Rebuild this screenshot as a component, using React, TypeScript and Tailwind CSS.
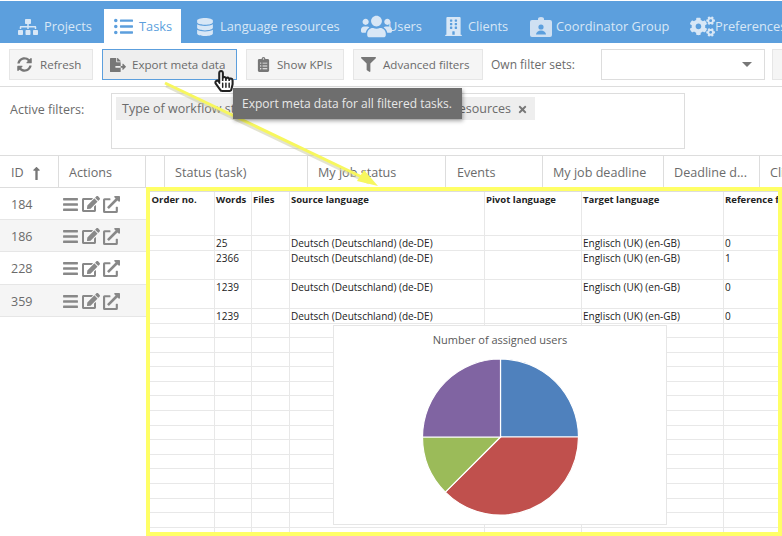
import { FaBars, FaBuilding, FaCogs, FaDatabase, FaEdit, FaExternalLinkAlt, FaFileExport, FaFilter, FaHandPointer, FaListUl, FaLongArrowAltUp, FaRegHandPointer, FaSitemap, FaSyncAlt, FaTimes, FaUsers, FaClipboardList } from "react-icons/fa"

const headers = [
  { label: "ID", width: "w-[59px]", pad: "pl-[11px]" },
  { label: "Actions", width: "w-[87px]", pad: "pl-[10px]" },
  { label: "", width: "w-[19px]", pad: "" },
  { label: "Status (task)", width: "w-[143px]", pad: "pl-[10px]" },
  { label: "My job status", width: "w-[138px]", pad: "pl-[10px]" },
  { label: "Events", width: "w-[97px]", pad: "pl-[11px]" },
  { label: "My job deadline", width: "w-[121px]", pad: "pl-[10px]" },
  { label: "Deadline d...", width: "w-[96px]", pad: "pl-[10px]" },
  { label: "Cli", width: "w-[30px]", pad: "pl-[10px]" },
]

const tasks = [
  { id: "184", row: "h-[32px] bg-white" },
  { id: "186", row: "h-[32px] bg-[#f5f5f5]" },
  { id: "228", row: "h-[33px] bg-white" },
  { id: "359", row: "h-[32px] bg-[#f5f5f5]" },
]

const sheetRows = [
  { h: "h-[15px]", words: "25", source: "Deutsch (Deutschland) (de-DE)", target: "Englisch (UK) (en-GB)", ref: "0" },
  { h: "h-[29px]", words: "2366", source: "Deutsch (Deutschland) (de-DE)", target: "Englisch (UK) (en-GB)", ref: "1" },
  { h: "h-[29px]", words: "1239", source: "Deutsch (Deutschland) (de-DE)", target: "Englisch (UK) (en-GB)", ref: "0" },
  { h: "h-[15px]", words: "1239", source: "Deutsch (Deutschland) (de-DE)", target: "Englisch (UK) (en-GB)", ref: "0" },
]

const emptyRows = Array.from({ length: 15 }, (_, i) => i)
const cell = "border-r border-b border-[#e8e8e8] align-top px-[1.5px] pt-[2px] overflow-hidden whitespace-nowrap"

function BadgeIcon() {
  return (
    <svg width="22" height="20" viewBox="0 0 22 20" className="shrink-0">
      <path d="M2 3 H8 V2 a3 2 0 0 1 6 0 V3 H20 a2 2 0 0 1 2 2 V18 a2 2 0 0 1 -2 2 H2 a2 2 0 0 1 -2 -2 V5 a2 2 0 0 1 2 -2 Z" fill="#cfe0f2" />
      <circle cx="11" cy="10" r="2.6" fill="#5c9fdd" />
      <path d="M6 17.5 a5 4 0 0 1 10 0 Z" fill="#5c9fdd" />
    </svg>
  )
}

export default function App() {
  return (
    <div className="relative w-[782px] h-[536px] overflow-hidden bg-white text-[#6b6b6b]" style={{ fontFamily: "'Open Sans', sans-serif" }}>
      {/* top nav */}
      <nav className="mt-[1px] h-[42px] bg-[#5c9fdd] flex items-end text-[12.8px] text-[#d8e7f6] overflow-hidden whitespace-nowrap">
        <div className="ml-[18px] h-[34px] flex items-center gap-[6px] w-[86px] shrink-0 pt-[1px]">
          <FaSitemap className="text-[20px] shrink-0" />
          <span>Projects</span>
        </div>
        <div className="w-[77px] h-[34px] bg-white text-[#5c9fdd] flex items-center gap-[6px] pl-[10px] shrink-0 pt-[1px]">
          <FaListUl className="text-[19px] shrink-0" />
          <span>Tasks</span>
        </div>
        <div className="ml-[15px] h-[34px] flex items-center gap-[6px] w-[165px] shrink-0 pt-[1px]">
          <FaDatabase className="text-[18px] shrink-0" />
          <span>Language resources</span>
        </div>
        <div className="h-[34px] flex items-center w-[83px] shrink-0 pt-[1px]">
          <FaUsers className="text-[31px] shrink-0 -mr-[4px]" />
          <span>Users</span>
        </div>
        <div className="h-[34px] flex items-center gap-[5px] w-[86px] shrink-0 pt-[1px]">
          <FaBuilding className="text-[19px] shrink-0" />
          <span>Clients</span>
        </div>
        <div className="h-[34px] flex items-center gap-[4px] w-[160px] shrink-0 pt-[1px]">
          <BadgeIcon />
          <span>Coordinator Group</span>
        </div>
        <div className="h-[34px] flex items-center shrink-0 pt-[1px]">
          <FaCogs className="text-[25px] shrink-0" />
          <span>Preferences</span>
        </div>
      </nav>

      {/* toolbar */}
      <div className="h-[44px] pt-[6px] pl-[9px] flex items-start text-[11.6px] border-b border-[#ddd] whitespace-nowrap">
        <button className="w-[84px] h-[31px] shrink-0 bg-[#f5f5f5] border border-[#e6e6e6] flex items-center pl-[7px] gap-[8px]">
          <FaSyncAlt className="text-[15px] text-[#777]" />
          <span className="pt-[1px]">Refresh</span>
        </button>
        <button className="ml-[9px] w-[135px] h-[31px] shrink-0 bg-[#eee] border border-[#5c9fdd] flex items-center pl-[7px] gap-[6px]">
          <FaFileExport className="text-[16px] text-[#777]" />
          <span className="pt-[1px]">Export meta data</span>
        </button>
        <button className="ml-[9px] w-[98px] h-[31px] shrink-0 bg-[#f5f5f5] border border-[#e6e6e6] flex items-center pl-[9px] gap-[6px]">
          <FaClipboardList className="text-[15px] text-[#777]" />
          <span className="pt-[1px]">Show KPIs</span>
        </button>
        <button className="ml-[9px] w-[130px] h-[31px] shrink-0 bg-[#f5f5f5] border border-[#e6e6e6] flex items-center pl-[7px] gap-[7px]">
          <FaFilter className="text-[15px] text-[#777]" />
          <span className="pt-[1px]">Advanced filters</span>
        </button>
        <span className="ml-[8px] mt-[7px] w-[110px] shrink-0 text-[12px]">Own filter sets:</span>
        <div className="w-[164px] h-[31px] shrink-0 border border-[#ddd] flex items-center justify-end pr-[12px]">
          <div className="w-0 h-0 border-x-[5px] border-x-transparent border-t-[5px] border-t-[#777]" />
        </div>
        <div className="ml-[7px] w-[20px] h-[31px] shrink-0 bg-[#f5f5f5] border border-[#e6e6e6]" />
      </div>

      {/* active filters */}
      <div className="h-[69px] pl-[10px] pt-[6px] flex items-start border-b border-[#ddd] text-[12.5px]">
        <span className="w-[101px] mt-[8px]">Active filters:</span>
        <div className="w-[574px] h-[56px] border border-[#ddd] pl-[4px] pt-[3px]">
          <div className="w-[419px] h-[23px] bg-[#eee] flex items-center pl-[6px] pr-[7px] pt-[1px]">
            <span className="whitespace-nowrap">Type of workflow step</span>
            <span className="ml-auto whitespace-nowrap">Language resources</span>
            <FaTimes className="ml-[6px] text-[11px] text-[#777]" />
          </div>
        </div>
      </div>

      {/* grid header */}
      <div className="flex h-[32px] border-b border-[#ddd] text-[12.6px] whitespace-nowrap">
        {headers.map((h, i) => (
          <div key={i} className={`${h.width} ${h.pad} shrink-0 flex items-center border-r border-[#ddd] pt-[3px]`}>
            {h.label}
            {h.label === "ID" && <FaLongArrowAltUp className="ml-[5px] text-[15px] text-[#777]" />}
          </div>
        ))}
      </div>

      {/* grid rows */}
      <div className="w-[146px]">
        {tasks.map((t) => (
          <div key={t.id} className={`${t.row} flex items-center border-b border-[#e6e6e6] text-[12.5px]`}>
            <span className="w-[62px] pl-[11px] pt-[3px]">{t.id}</span>
            <div className="flex items-center gap-[3px] text-[#888] pt-[1px]">
              <FaBars className="text-[17px]" />
              <FaEdit className="text-[18px]" />
              <FaExternalLinkAlt className="text-[17px]" />
            </div>
          </div>
        ))}
      </div>

      {/* pasted spreadsheet with yellow frame */}
      <div className="absolute left-[146px] top-[187px] w-[636px] h-[349px] border-4 border-[#ffff66] bg-white overflow-hidden">
        <div className="border-t border-[#ddd]">
          <table className="table-fixed w-[640px] border-collapse text-[10px] leading-[11px] text-[#222]">
            <colgroup>
              <col className="w-[64px]" />
              <col className="w-[37px]" />
              <col className="w-[38px]" />
              <col className="w-[195px]" />
              <col className="w-[97px]" />
              <col className="w-[142px]" />
              <col />
            </colgroup>
            <tbody>
              <tr className="h-[43px] font-bold text-[9.5px]">
                <td className={cell}>Order no.</td>
                <td className={cell}>Words</td>
                <td className={cell}>Files</td>
                <td className={cell}>Source language</td>
                <td className={cell}>Pivot language</td>
                <td className={cell}>Target language</td>
                <td className={cell}>Reference f</td>
              </tr>
              {sheetRows.map((r, i) => (
                <tr key={i} className={r.h}>
                  <td className={cell} />
                  <td className={cell}>{r.words}</td>
                  <td className={cell} />
                  <td className={cell}>{r.source}</td>
                  <td className={cell} />
                  <td className={cell}>{r.target}</td>
                  <td className={cell}>{r.ref}</td>
                </tr>
              ))}
              {emptyRows.map((i) => (
                <tr key={i} className="h-[14.6px]">
                  <td className={cell} />
                  <td className={cell} />
                  <td className={cell} />
                  <td className={cell} />
                  <td className={cell} />
                  <td className={cell} />
                  <td className={cell} />
                </tr>
              ))}
            </tbody>
          </table>
        </div>
      </div>

      {/* chart */}
      <div className="absolute left-[333px] top-[325px] w-[334px] h-[200px] bg-white border border-[#e6e6e6] flex flex-col items-center">
        <span className="mt-[5px] text-[11px] leading-[18px] text-[#595959]">Number of assigned users</span>
        <svg width="160" height="160" viewBox="0 0 160 160" className="mt-[8px] translate-x-[0.5px]">
          <g stroke="#fff" strokeWidth="1.2">
            <path d="M80 80 L80 2 A78 78 0 0 1 158 80 Z" fill="#4f81bd" />
            <path d="M80 80 L158 80 A78 78 0 0 1 24.8 135.2 Z" fill="#c0504d" />
            <path d="M80 80 L24.8 135.2 A78 78 0 0 1 2 80 Z" fill="#9bbb59" />
            <path d="M80 80 L2 80 A78 78 0 0 1 80 2 Z" fill="#8064a2" />
          </g>
        </svg>
      </div>

      {/* yellow arrow */}
      <svg className="absolute left-0 top-0 pointer-events-none" width="782" height="536">
        <line x1="165" y1="84" x2="368" y2="181" stroke="#c9c9a0" strokeWidth="3" opacity="0.5" transform="translate(1 2)" />
        <line x1="165" y1="83" x2="366" y2="179" stroke="#f7f75e" strokeWidth="3" />
        <path d="M378 186 L357 181 L364 170 Z" fill="#f7f75e" />
      </svg>

      {/* tooltip */}
      <div className="absolute left-[233px] top-[88px] w-[229px] h-[31px] bg-[#6e6e6e] text-[#e8e8e8] text-[12px] flex items-center pl-[9px] whitespace-nowrap shadow-[1px_2px_4px_rgba(0,0,0,0.35)]">
        Export meta data for all filtered tasks.
      </div>

      {/* mouse pointer */}
      <div className="absolute left-[213px] top-[70px] w-[20px] h-[24px] text-[22px]">
        <FaHandPointer className="absolute inset-0 text-white" />
        <FaRegHandPointer className="absolute inset-0 text-[#222]" />
      </div>
    </div>
  )
}
